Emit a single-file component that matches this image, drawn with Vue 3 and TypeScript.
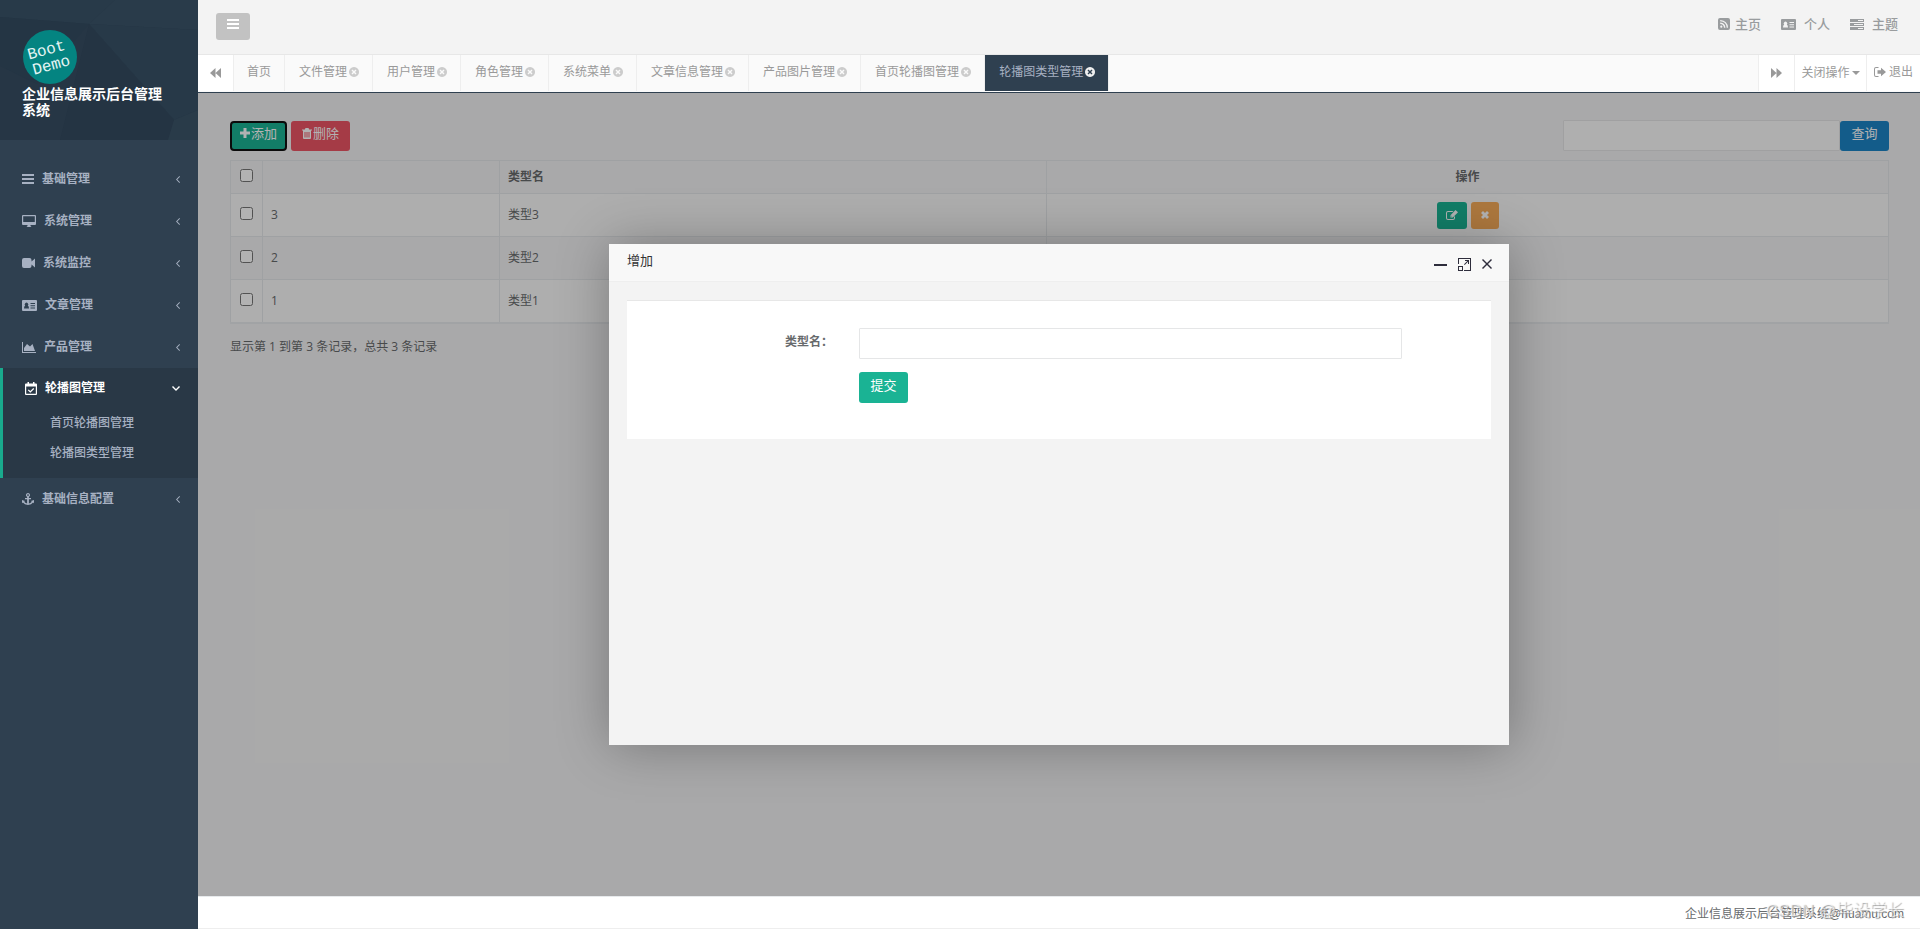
<script setup lang="ts">
import { h, ref } from 'vue'

interface Icon { w: number; h: number; d: string }
interface Menu { label: string; icon: string; open?: boolean; children?: string[] }

const icons: Record<string, Icon> = {
  bars: { w: 12, h: 10, d: 'M0 0h12v2H0zM0 4h12v2H0zM0 8h12v2H0z' },
  desktop: { w: 14, h: 12, d: 'M1 0h12q1 0 1 1v8q0 1-1 1H8.5v1l1 1h-5l1-1v-1H1q-1 0-1-1V1q0-1 1-1zM1.2 1.2V7h11.6V1.2z' },
  video: { w: 13, h: 10, d: 'M2 0h5.5q2 0 2 2v1.5L13 .5v9l-3.5-3V8q0 2-2 2H2Q0 10 0 8V2q0-2 2-2z' },
  card: { w: 15, h: 11, d: 'M1 0h13q1 0 1 1v9q0 1-1 1H1q-1 0-1-1V1q0-1 1-1zM2 8.5h5q0-2.5-1.2-2.8a1.8 1.8 0 1 0-2.6 0Q2 6 2 8.5zM8.5 3v1H13V3zM8.5 5.2v1H13v-1zM8.5 7.4v1H13v-1z' },
  area: { w: 14, h: 11, d: 'M0 0h1v10h13v1H0zM2 9V6l3-4 3 2.5L10.5 2 13 9z' },
  calendar: { w: 12, h: 13, d: 'M2.5 0H4v1.5h4V0h1.5v1.5H11q1 0 1 1V12q0 1-1 1H1q-1 0-1-1V2.5q0-1 1-1h1.5zM1.2 4.5v7.3h9.6V4.5zM5.3 10.8 2.8 8.3l.9-.9L5.3 9l3-3 .9.9z' },
  anchor: { w: 12, h: 12, d: 'M6 0a2 2 0 0 1 .9 3.8V5H9v1.3H6.9v4.1Q9 10 9.8 8.8L8.9 8 12 7v3.2l-.9-.6Q9.5 12 6 12T.9 9.6l-.9.6V7l3.1 1-.9.8Q3 10 5.1 10.4V6.3H3V5h2.1V3.8A2 2 0 0 1 6 0zM6 1.2a.8.8 0 1 0 .01 0z' },
  rss: { w: 12, h: 12, d: 'M2 0h8q2 0 2 2v8q0 2-2 2H2q-2 0-2-2V2q0-2 2-2zM2.2 8.7a1.1 1.1 0 1 0 2.2 0 1.1 1.1 0 1 0-2.2 0zM2.2 4.6V6Q5.800 6.200 6 9.800h1.400Q7.100 4.900 2.200 4.600zM2.200 2v1.300Q8.400 3.700 8.700 9.800H10Q9.600 2.400 2.200 2z' },
  server: { w: 14, h: 11, d: 'M0 0h14v3H0zM0 4h14v3H0zM0 8h14v3H0zM8 1v1h5V1zM4 5v1h9V5zM8 9v1h5V9z' },
  backward: { w: 11, h: 10, d: 'M5.5 0v10L0 5zM11 0v10L5.5 5z' },
  forward: { w: 11, h: 10, d: 'M0 0v10l5.5-5zM5.5 0v10L11 5z' },
  exit: { w: 12, h: 10, d: 'M4.5 0v1H2Q1 1 1 2v6q0 1 1 1h2.5v1H2Q0 10 0 8V2q0-2 2-2zM7 .8 12 5 7 9.2V6.7H3.5V3.3H7z' },
  closeTab: { w: 10, h: 10, d: 'M5 0a5 5 0 1 0 .01 0zM3.5 2.5 5 4l1.5-1.5 1 1L6 5l1.5 1.5-1 1L5 6 3.5 7.5l-1-1L4 5 2.5 3.5z' },
  plus: { w: 10, h: 10, d: 'M3.5 0h3v3.5H10v3H6.5V10h-3V6.5H0v-3h3.5z' },
  trash: { w: 10, h: 11, d: 'M3.5 0h3l.7 1.5H10v1H9V10q0 1-1 1H2q-1 0-1-1V2.500H0v-1h2.800zM2.500 4v5.500h1V4zM4.500 4v5.500h1V4zM6.500 4v5.500h1V4z' },
  edit: { w: 12, h: 10, d: 'M2 1h5.500l-1 1H2Q1 2 1 3v5q0 1 1 1h5q1 0 1-1V7l1-1v2q0 2-2 2H2Q0 10 0 8V3q0-2 2-2zM9.500 0 12 2.300 6.800 7.500H4.500V5.200zM5.400 5.600v1h1z' },
  times: { w: 8, h: 8, d: 'M2 0l2 2 2-2 2 2-2 2 2 2-2 2-2-2-2 2-2-2 2-2-2-2z' },
  left: { w: 4, h: 7, d: 'M3.4 0 4 .7 1.3 3.5 4 6.3l-.6.7L0 3.5z' },
  down: { w: 8, h: 5, d: 'M1 0l3 3 3-3 1 1-4 4-4-4z' },
  minimize: { w: 13, h: 12, d: 'M0 6h13v2H0z' },
  maximize: { w: 13, h: 13, d: 'M0 0h13v13H6v-1h6V1H1v5H0zM0 8h5v5H0zM1 9v3h3V9zM7 2h4v4h-1V3.700L6.700 7 6 6.300 9.300 3H7z' },
  close: { w: 10, h: 10, d: 'M1 0l4 4 4-4 1 1-4 4 4 4-1 1-4-4-4 4-1-1 4-4-4-4z' },
}

const menus = ref<Menu[]>([
  { label: '基础管理', icon: 'bars' },
  { label: '系统管理', icon: 'desktop' },
  { label: '系统监控', icon: 'video' },
  { label: '文章管理', icon: 'card' },
  { label: '产品管理', icon: 'area' },
  { label: '轮播图管理', icon: 'calendar', open: true, children: ['首页轮播图管理', '轮播图类型管理'] },
  { label: '基础信息配置', icon: 'anchor' },
])
const tabs = ['首页', '文件管理', '用户管理', '角色管理', '系统菜单', '文章信息管理', '产品图片管理', '首页轮播图管理', '轮播图类型管理']
const activeTab = ref('轮播图类型管理')
const links = [
  { label: '主页', icon: 'rss' },
  { label: '个人', icon: 'card' },
  { label: '主题', icon: 'server' },
]
const rows = [
  { id: 3, name: '类型3' },
  { id: 2, name: '类型2' },
  { id: 1, name: '类型1' },
]
const keyword = ref('')
const typeName = ref('')

const Glyph = (props: { name: string }) => {
  const i = icons[props.name]
  return h('svg', { class: 'glyph', width: i.w, height: i.h, viewBox: `0 0 ${i.w} ${i.h}`, fill: 'currentColor', 'aria-hidden': 'true' }, [
    h('path', { d: i.d, 'fill-rule': 'evenodd' }),
  ])
}
Glyph.props = ['name']
</script>

<template>
  <div class="app">
    <aside class="sidebar">
      <header class="brand">
        <svg class="facets" viewBox="0 0 198 140" preserveAspectRatio="none" aria-hidden="true">
          <path d="M0 0h198v140H0z" fill="#263645" />
          <path d="M0 0h115L89 24 0 17z" fill="#283a49" />
          <path d="M115 0h83v30L89 24z" fill="#293b4a" />
          <path d="M89 24 198 30v80l-24 10z" fill="#273948" />
          <path d="M0 17l89 7-52 60L0 66z" fill="#243544" />
          <path d="M89 24l85 96-6 20H60z" fill="#243443" />
          <path d="M174 120l24-10v30h-30z" fill="#293b49" />
        </svg>
        <svg class="logo" width="54" height="54" viewBox="0 0 54 54" role="img" aria-label="Boot Demo">
          <circle cx="27" cy="27" r="27" fill="#048481" />
          <g transform="rotate(-15 27 27)" fill="#e5f5f4">
            <text x="6" y="24">Boot</text>
            <text x="7" y="40">Demo</text>
          </g>
        </svg>
        <strong class="brand-name">企业信息展示后台管理系统</strong>
      </header>
      <nav>
        <ul class="menu">
          <li v-for="m in menus" :key="m.label" :class="{ open: m.open }">
            <button type="button" class="menu-item" :aria-expanded="!!m.open" @click="m.open = !m.open">
              <Glyph :name="m.icon" />
              <span class="menu-label">{{ m.label }}</span>
              <Glyph :name="m.open ? 'down' : 'left'" />
            </button>
            <ul v-if="m.open && m.children" class="submenu">
              <li v-for="c in m.children" :key="c"><a href="#">{{ c }}</a></li>
            </ul>
          </li>
        </ul>
      </nav>
    </aside>

    <div class="page">
      <header class="topbar">
        <button type="button" class="toggle" aria-label="菜单"><Glyph name="bars" /></button>
        <nav class="links">
          <a v-for="l in links" :key="l.label" href="#"><Glyph :name="l.icon" />{{ l.label }}</a>
        </nav>
      </header>

      <div class="tabbar">
        <button type="button" class="tool back" aria-label="向左"><Glyph name="backward" /></button>
        <nav class="tabs">
          <a v-for="t in tabs" :key="t" href="#" :class="['tab', { active: t === activeTab }]" @click.prevent="activeTab = t">
            {{ t }}<Glyph v-if="t !== '首页'" name="closeTab" />
          </a>
        </nav>
        <button type="button" class="tool fwd" aria-label="向右"><Glyph name="forward" /></button>
        <button type="button" class="tool ops">关闭操作<span class="caret"></span></button>
        <a href="#" class="tool quit"><Glyph name="exit" />退出</a>
      </div>

      <main class="content">
        <div class="toolbar">
          <button type="button" class="btn primary focused"><Glyph name="plus" />添加</button>
          <button type="button" class="btn danger"><Glyph name="trash" />删除</button>
          <form class="search" @submit.prevent>
            <input v-model="keyword" type="text" class="field" aria-label="查询" />
            <button type="submit" class="btn info">查询</button>
          </form>
        </div>
        <table class="grid">
          <colgroup>
            <col class="c-check" /><col class="c-id" /><col class="c-name" /><col />
          </colgroup>
          <thead>
            <tr>
              <th><input type="checkbox" aria-label="全选" /></th>
              <th></th>
              <th>类型名</th>
              <th class="center">操作</th>
            </tr>
          </thead>
          <tbody>
            <tr v-for="r in rows" :key="r.id">
              <td><input type="checkbox" :aria-label="r.name" /></td>
              <td>{{ r.id }}</td>
              <td>{{ r.name }}</td>
              <td class="center">
                <div class="actions">
                  <button type="button" class="mini primary" aria-label="编辑"><Glyph name="edit" /></button>
                  <button type="button" class="mini warning" aria-label="删除"><Glyph name="times" /></button>
                </div>
              </td>
            </tr>
          </tbody>
        </table>
        <p class="summary">显示第 1 到第 3 条记录，总共 3 条记录</p>

        <div class="shade">
          <section class="dialog" role="dialog" aria-labelledby="dialog-title">
            <header class="dialog-head">
              <h2 id="dialog-title">增加</h2>
              <button type="button" aria-label="最小化"><Glyph name="minimize" /></button>
              <button type="button" aria-label="最大化"><Glyph name="maximize" /></button>
              <button type="button" aria-label="关闭"><Glyph name="close" /></button>
            </header>
            <form class="panel" @submit.prevent>
              <label for="type-name">类型名：</label>
              <input id="type-name" v-model="typeName" type="text" class="field" />
              <button type="submit" class="btn primary submit">提交</button>
            </form>
          </section>
        </div>
      </main>

      <footer class="footer">
        <span>企业信息展示后台管理系统@huamu.com</span>
        <span class="mark">CSDN @毕设学长</span>
      </footer>
    </div>
  </div>
</template>

<style>
body { background: #fff; }
</style>

<style scoped>
.app, .app * { box-sizing: border-box; }
.app {
  display: flex;
  min-height: 100vh;
  color: #676a6c;
  font: 12px/18px "Open Sans", "Noto Sans CJK SC", sans-serif;
}
.app button, .app input { font-family: inherit; }
.app button { cursor: pointer; }
.app a { color: inherit; text-decoration: none; }
ul { list-style: none; margin: 0; padding: 0; }
.glyph { flex: none; display: block; }

.sidebar { flex: 0 0 198px; background: #2f4050; color: #a7b1c2; }
.brand { position: relative; height: 140px; padding: 30px 30px 0 22px; }
.facets { position: absolute; inset: 0; width: 100%; height: 100%; }
.logo { position: relative; display: block; margin-left: 1px; font: 16px "Liberation Mono", monospace; }
.brand-name { position: relative; display: block; margin-top: 2px; color: #fff; font-size: 14px; line-height: 16px; }
.menu { padding-top: 18px; }
.menu-item {
  display: flex; align-items: center; gap: 8px; width: 100%; height: 42px;
  padding: 0 18px 0 22px; border: 0; background: none; color: inherit;
  font-size: 12px; line-height: 18px; font-weight: 600; text-align: left;
}
.menu-label { flex: 1; }
.open { background: #293846; border-left: 3px solid #19aa8d; padding-bottom: 10px; }
.open .menu-item { color: #fff; height: 40px; }
.submenu a { display: block; padding: 6px 0 6px 47px; font-weight: 500; }

.page { flex: 1; min-width: 0; display: flex; flex-direction: column; }
.topbar { display: flex; justify-content: space-between; align-items: flex-start; height: 55px; padding: 13px 22px 0 18px; background: #f3f3f3; border-bottom: 1px solid #e7e7e7; }
.toggle { display: flex; justify-content: center; width: 34px; height: 27px; padding: 6px 0 0; border: 0; border-radius: 3px; background: #c2c2c2; color: #fff; }
.links { display: flex; gap: 20px; color: #999c9e; font-size: 13px; line-height: 20px; padding-top: 1px; font-weight: 500; }
.links a { display: flex; align-items: center; gap: 8px; }
.links a:first-child { gap: 5px; }

.tabbar { display: flex; height: 38px; padding-bottom: 1px; background: #fafafa; border-bottom: 1px solid #2f4050; color: #999; }
.tabs { flex: 1; display: flex; min-width: 0; overflow: hidden; }
.tab { display: flex; align-items: center; gap: 2px; padding: 0 13px 2px 14px; border-right: 1px solid #eee; white-space: nowrap; }
.tab:first-child { padding-inline: 13px; }
.tab .glyph { color: #ccc; }
.tab.active { background: #2f4050; color: #a7b1c2; }
.tab.active .glyph { color: #eee; }
.tool { display: flex; align-items: center; justify-content: center; border: 0; border-left: 1px solid #eee; background: #fff; color: #999; padding: 0; font-size: 12px; line-height: 18px; }
.back { width: 36px; border-left: 0; border-right: 1px solid #eee; }
.fwd { width: 36px; }
.ops { width: 72px; gap: 2px; }
.quit { width: 54px; padding-bottom: 2px; gap: 3px; }
.caret { border: 4px solid transparent; border-top-color: currentColor; border-bottom: 0; }

.content { position: relative; flex: 1; padding: 27px 31px 27px 32px; background: #f3f3f4; }
.toolbar { display: flex; align-items: flex-end; gap: 4px; margin-bottom: 9px; }
.btn {
  display: flex; align-items: center; justify-content: center; gap: 1px;
  min-width: 49px; height: 30px; padding: 0 11px 6px; border: 0; border-radius: 3px;
  color: #fff; font-size: 13px; line-height: 20px;
}
.primary { background: #1ab394; }
.danger { background: #ed5565; }
.info { background: #1c84c6; }
.warning { background: #f8ac59; }
.focused { border: 2px solid #101010; padding: 0 8px 6px; border-radius: 4px; }
.search { display: flex; align-items: flex-end; margin-left: auto; }
.field { height: 31px; padding: 4px 10px; border: 1px solid #e5e6e7; border-radius: 1px; background: #fff; color: inherit; font-size: 13px; outline: 0; }
.search .field { width: 277px; background: #fbfbfb; }

.grid { width: 100%; table-layout: fixed; border-collapse: collapse; border: 1px solid #e7eaec; border-bottom-width: 2px; }
.c-check { width: 32px; }
.c-id { width: 14.3%; }
.c-name { width: 33%; }
.grid th, .grid td { padding: 0 8px; border: 1px solid #e4e7ea; text-align: left; height: 43px; font-weight: 400; }
.grid th { height: 33px; font-weight: 600; }
.grid tbody tr:nth-child(odd) { background: #f9f9f9; }
.grid .center { text-align: center; }
.grid input { display: block; margin: 0 auto 3px; }
.actions { display: flex; justify-content: center; gap: 4px; }
.mini { display: flex; justify-content: center; align-items: center; height: 27px; padding: 0 10px; border: 0; border-radius: 3px; color: #fff; }
.mini.primary { padding: 0 9px; }
.summary { margin: 14px 0 0; }

.shade { position: absolute; inset: 0; display: grid; place-items: center; background: rgba(0, 0, 0, .3); }
.dialog { width: 900px; max-width: 100%; min-height: 501px; background: #f3f3f3; box-shadow: 1px 1px 50px rgba(0, 0, 0, .3); color: #676a6c; }
.dialog-head { display: flex; align-items: center; gap: 11px; height: 38px; padding: 0 17px 0 18px; background: #f8f8f8; border-bottom: 1px solid #eee; color: #2e2d3c; }
.dialog-head h2 { flex: 1; margin: 0 0 5px; color: #333; font-size: 13px; line-height: 20px; font-weight: 400; }
.dialog-head button { padding: 3px 0 0; border: 0; background: none; color: inherit; }
.panel {
  display: grid; grid-template-columns: 206fr 543fr 63fr; gap: 13px 26px; align-content: start;
  margin: 18px; padding: 27px 0 36px; min-height: 139px; background: #fff; border-top: 1px solid #e7e7e7;
}
.panel label { text-align: right; font-weight: 600; padding-top: 5px; }
.submit { grid-column: 2; justify-self: start; height: 31px; }

.footer { position: relative; height: 33px; padding: 8px 16px 0; text-align: right; background: #fff; border-top: 1px solid #e7eaec; border-bottom: 1px solid #eee; font-family: "Liberation Sans", "Noto Sans CJK SC", sans-serif; }
.mark { position: absolute; right: 16px; top: 2px; color: rgba(255, 255, 255, .6); font-size: 17px; line-height: 24px; font-weight: 300; text-shadow: 1px 1px 1px #999; }
</style>
